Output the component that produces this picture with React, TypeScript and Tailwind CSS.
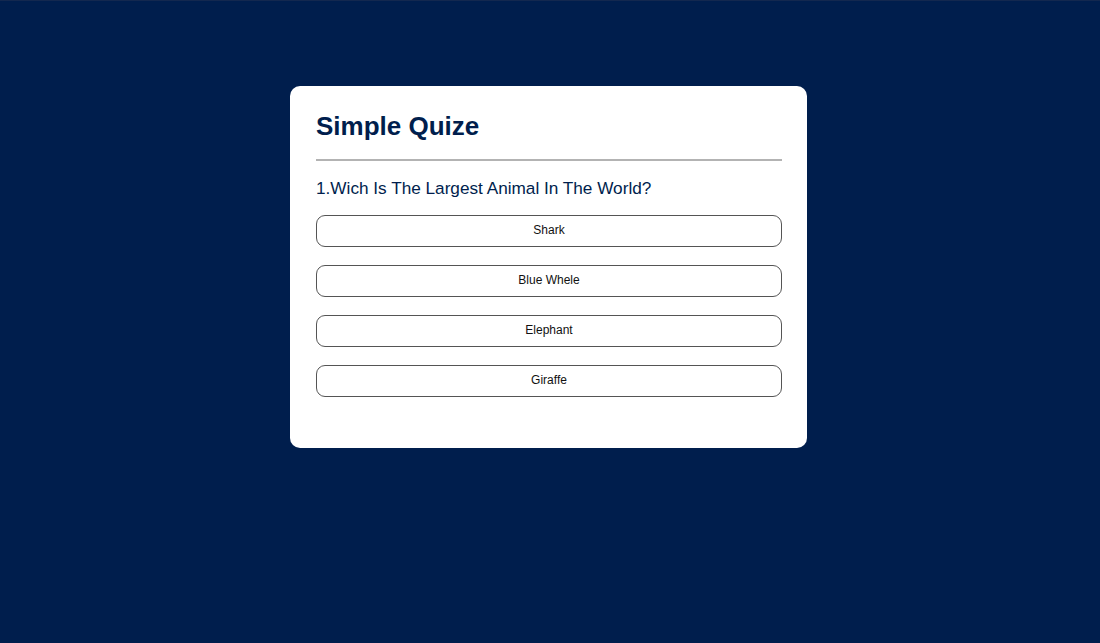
export default function App() {
  const answers = ["Shark", "Blue Whele", "Elephant", "Giraffe"];
  return (
    <div
      className="min-h-screen w-full bg-[#001e4d] border-t border-[#13284f] pt-[85px]"
      style={{ fontFamily: '"Liberation Sans", Arial, sans-serif' }}
    >
      <div className="ml-[290px] w-[517px] rounded-[10px] bg-white pl-[26px] pr-[25px] pt-[26px] pb-[51px]">
        <h1 className="border-b-2 border-[#b3b3b3] pb-[18px] text-[26px] font-bold leading-[29px] text-[#001e4d]">
          Simple Quize
        </h1>
        <div className="mt-[17px]">
          <h2 className="text-[17.2px] font-normal leading-[20px] text-[#001e4d]">
            1.Wich Is The Largest Animal In The World?
          </h2>
          <div className="mt-[17px] flex flex-col gap-[18px]">
            {answers.map((a) => (
              <button
                key={a}
                className="h-8 w-full rounded-[9px] border border-[#555] bg-white pb-[2px] text-[12px] text-[#111]"
              >
                {a}
              </button>
            ))}
          </div>
        </div>
      </div>
    </div>
  );
}
